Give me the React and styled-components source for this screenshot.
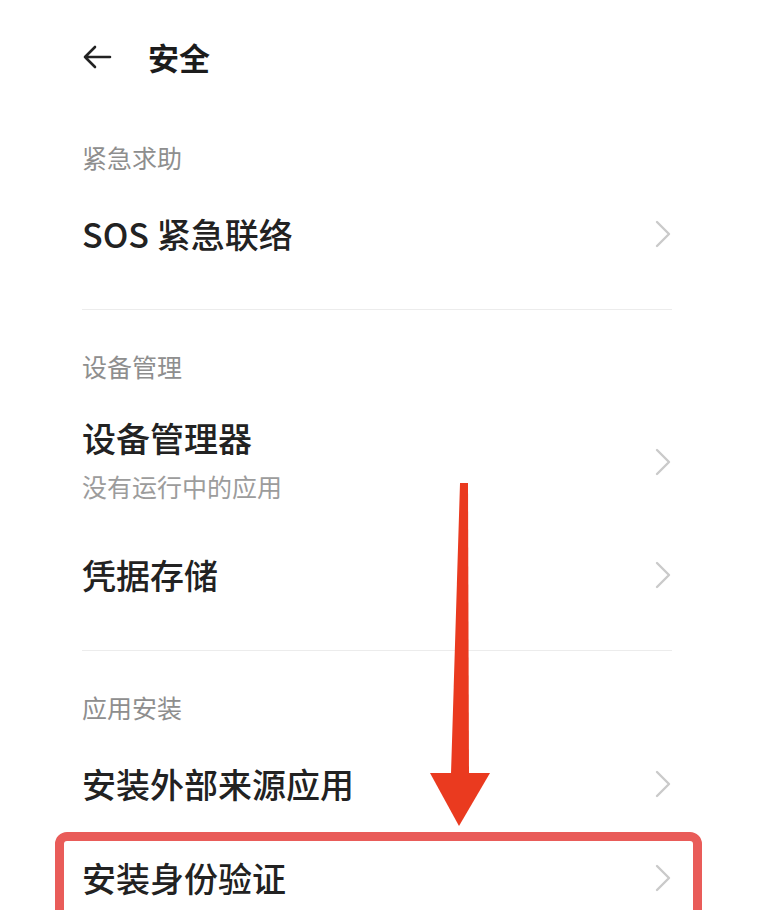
import React from 'react';
import styled, { createGlobalStyle, css } from 'styled-components';

const GlobalStyle = createGlobalStyle`
  body {
    margin: 0;
    background: #fff;
    font-family: "Noto Sans CJK SC", "Noto Sans", sans-serif;
  }
`;

const Page = styled.div`
  position: relative;
  height: 910px;
  overflow: hidden;
  padding: 40px 85px 0 82px;
  box-sizing: border-box;
  background: #fff;
`;

const Header = styled.header`
  display: flex;
  align-items: center;
  gap: 36px;
  height: 34px;
`;

const Title = styled.h1`
  margin: 0;
  font-size: 31px;
  line-height: 34px;
  font-weight: 700;
  color: #1c1c1c;
`;

const SectionLabel = styled.div`
  margin: ${p => (p.$first ? 68 : 41)}px 0 15px;
  font-size: 25px;
  line-height: 30px;
  color: #8e8e8e;
`;

const Row = styled.div`
  position: relative;
  display: flex;
  align-items: center;
  justify-content: space-between;
  height: ${p => (p.$tall ? 132 : 94)}px;
  ${p => p.$highlight && css`
    &::after {
      content: "";
      position: absolute;
      top: 1px;
      left: -27px;
      right: -30px;
      bottom: -30px;
      border: 9px solid #e95c59;
      border-radius: 12px;
    }
  `}
`;

const RowText = styled.div`
  display: flex;
  flex-direction: column;
  padding-bottom: ${p => (p.$tall ? 6 : 0)}px;
`;

const RowTitle = styled.div`
  font-size: 34px;
  line-height: 40px;
  font-weight: 500;
  color: #222;
`;

const RowSub = styled.div`
  margin-top: 13px;
  font-size: 25px;
  line-height: 30px;
  color: #9c9c9c;
`;

const Divider = styled.div`
  height: 1px;
  margin-top: 28px;
  background: #ececec;
`;

const ArrowMark = styled.svg`
  position: absolute;
  left: 428px;
  top: 480px;
`;

function Chevron() {
  return (
    <svg width="18" height="30" viewBox="0 0 18 30">
      <polyline points="3,3 15,15 3,27" fill="none" stroke="#cacaca" strokeWidth="2.4" strokeLinecap="round" strokeLinejoin="round" />
    </svg>
  );
}

function BackArrow() {
  return (
    <svg width="30" height="24" viewBox="0 0 30 24">
      <path d="M28 12H3M13 2L3 12l10 10" fill="none" stroke="#222" strokeWidth="2.6" strokeLinecap="round" strokeLinejoin="round" />
    </svg>
  );
}

function Item({ title, sub, highlight }) {
  return (
    <Row $tall={!!sub} $highlight={highlight}>
      <RowText $tall={!!sub}>
        <RowTitle>{title}</RowTitle>
        {sub && <RowSub>{sub}</RowSub>}
      </RowText>
      <Chevron />
    </Row>
  );
}

const sections = [
  { label: '紧急求助', items: [{ title: 'SOS 紧急联络' }] },
  { label: '设备管理', items: [{ title: '设备管理器', sub: '没有运行中的应用' }, { title: '凭据存储' }] },
  { label: '应用安装', items: [{ title: '安装外部来源应用' }, { title: '安装身份验证', highlight: true }] },
];

export default function App() {
  return (
    <Page>
      <GlobalStyle />
      <Header>
        <BackArrow />
        <Title>安全</Title>
      </Header>
      {sections.map((s, i) => (
        <section key={s.label}>
          <SectionLabel $first={i === 0}>{s.label}</SectionLabel>
          {s.items.map(it => (
            <Item key={it.title} {...it} />
          ))}
          {i < sections.length - 1 && <Divider />}
        </section>
      ))}
      <ArrowMark width="64" height="350" viewBox="0 0 64 350">
        <polygon points="32,3 40,3 41,294 23,294" fill="#ea3a1f" />
        <polygon points="2,293 62,293 31,346" fill="#ea3a1f" />
      </ArrowMark>
    </Page>
  );
}
